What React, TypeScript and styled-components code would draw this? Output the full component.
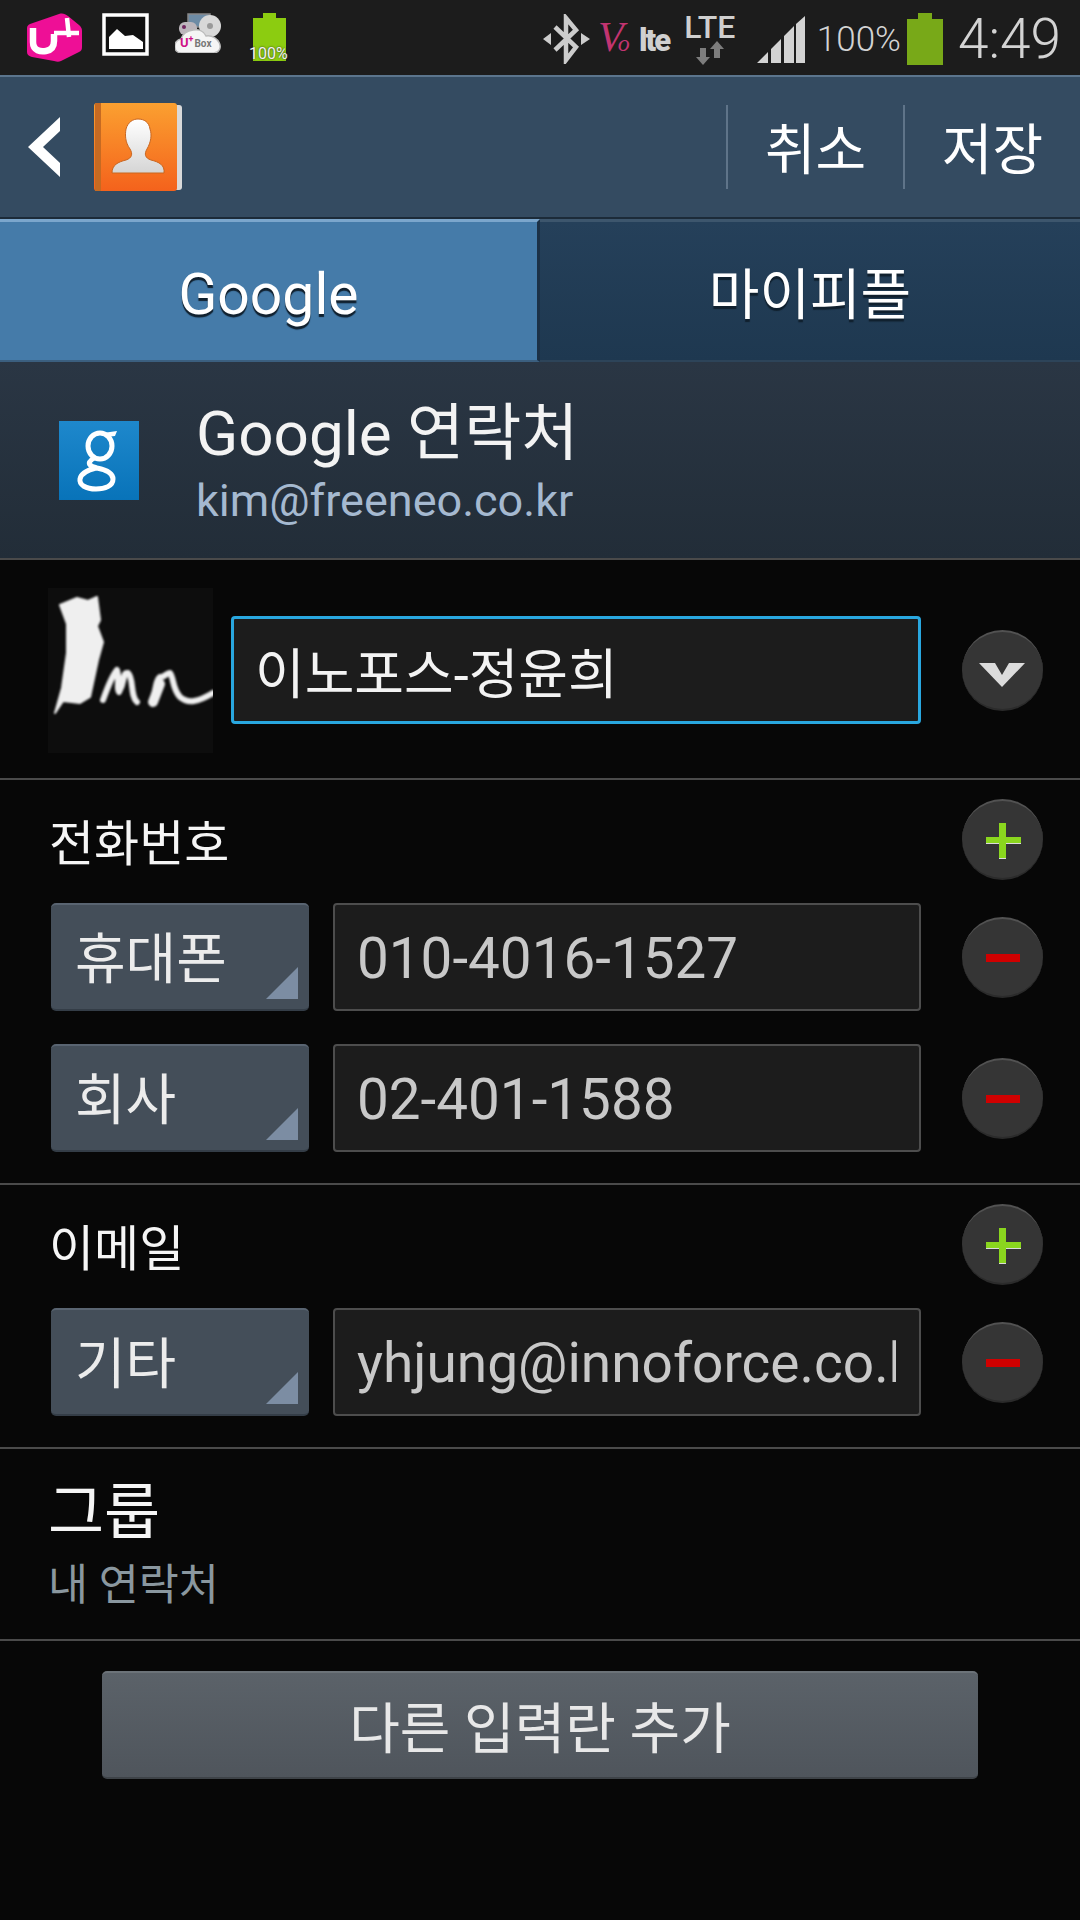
import React from "react";
import styled, { createGlobalStyle } from "styled-components";

const sans = `Roboto, "Noto Sans CJK KR", sans-serif`;

const Global = createGlobalStyle`
  html, body {
    margin: 0;
    padding: 0;
    background: #070707;
  }
  * {
    box-sizing: border-box;
  }
`;

function App() {
  return (
    <Page>
      <Global />
      <StatusBar>
        <Glyph $left={27} width="55" height="49" viewBox="0 0 55 49">
          <path d="M3 11 32 1C36 0 38 1 41 3L52 12C54 14 55 15 55 18V34C55 37 54 38 52 39L34 48C32 49 30 49 27 48L5 44C2 43 0 42 0 39V15C0 13 1 12 3 11Z" fill="#ee0f96" />
          <path d="M6 15V29C6 38 14 39 19 38 25 37 27 33 27 28V21" fill="none" stroke="#fff" strokeWidth="6.5" />
          <path d="M27 20 52 20M40 5 42 24" fill="none" stroke="#fff" strokeWidth="4.5" />
        </Glyph>
        <Glyph $left={20} width="47" height="43" viewBox="0 0 47 43">
          <rect x="2" y="2" width="43" height="39" fill="#111" stroke="#fff" strokeWidth="3.5" />
          <path d="M7 36V24L15 16 23 23 31 22 41 29V36Z" fill="#fff" />
        </Glyph>
        <Glyph $left={26} width="47" height="40" viewBox="0 0 47 40">
          <rect x="13" y="1" width="22" height="13" fill="#6d8ba5" stroke="#888" strokeWidth="1.5" />
          <circle cx="35" cy="13" r="11" fill="#d8d8d8" />
          <circle cx="35" cy="13" r="3" fill="#999" />
          <rect x="4" y="9" width="18" height="13" rx="6" fill="#bcb6bc" />
          <circle cx="9" cy="14" r="2" fill="#70255f" />
          <path d="M7 40C-3 40-2 27 6 26 9 16 27 13 31 23 44 21 51 38 39 40Z" fill="#f5f5f5" stroke="#bbb" strokeWidth="1.5" />
          <text x="5" y="34" fontFamily="Roboto" fontWeight="700" fontSize="13" fill="#cf1287">
            U<tspan fontSize="9" dy="-5">+</tspan>
            <tspan fontSize="10" dy="5" dx="1" fill="#777">Box</tspan>
          </text>
        </Glyph>
        <BatteryWithLabel>
          <svg width="33" height="48" viewBox="0 0 33 48">
            <path d="M10 0H23V5H33V48H0V5H10Z" fill="#8ccc10" />
          </svg>
          <BatteryLabel>100%</BatteryLabel>
        </BatteryWithLabel>
        <StatusRight>
          <Glyph $left={0} width="47" height="50" viewBox="0 0 47 50">
            <path d="M12 13 33 33 23 46V4L33 16 12 36" fill="none" stroke="#ccc" strokeWidth="4.5" />
            <path d="M0 25 8 19V31ZM47 25 38 19V31Z" fill="#ccc" />
          </Glyph>
          <Glyph $left={6} width="78" height="36" viewBox="0 0 78 36">
            <text x="2" y="30" fontFamily="Liberation Serif" fontStyle="italic" fontSize="42" fill="#c23471">
              V<tspan fontSize="24" dx="-6">o</tspan>
            </text>
            <text x="43" y="30" fontFamily="Roboto" fontWeight="900" fontSize="31" letterSpacing="-2" fill="#d0d0d0">lte</text>
          </Glyph>
          <LteStack>
            <LteText>LTE</LteText>
            <svg width="28" height="24" viewBox="0 0 28 24">
              <path d="M4 7H10V16H14L7 24 0 16H4ZM18 8H24V17H18ZM21 0 28 8H14Z" fill="#7d7d7d" />
            </svg>
          </LteStack>
          <Glyph $left={22} width="48" height="47" viewBox="0 0 48 47">
            <path d="M0 47 11 36V47ZM14 33 24 23V47H14ZM27 20 37 10V47H27ZM39 8 48 0V47H39Z" fill="#d3d3d3" />
          </Glyph>
          <SignalPercent>100%</SignalPercent>
          <Glyph $left={6} width="36" height="52" viewBox="0 0 36 52">
            <path d="M11 0H25V6H36V52H0V6H11Z" fill="#78a918" />
          </Glyph>
          <Clock>4:49</Clock>
        </StatusRight>
      </StatusBar>

      <ActionBar>
        <svg width="32" height="60" viewBox="0 0 32 60">
          <path d="M0 30 32 0V14L15 30 32 46V60Z" fill="#fff" />
        </svg>
        <ContactsIcon width="88" height="88" viewBox="0 0 88 88">
          <defs>
            <linearGradient id="book" x1="0" y1="0" x2="0" y2="1">
              <stop offset="0" stopColor="#fba030" />
              <stop offset="1" stopColor="#f4621c" />
            </linearGradient>
            <linearGradient id="bust" x1="0" y1="0" x2="0" y2="1">
              <stop offset="0" stopColor="#fff" />
              <stop offset="1" stopColor="#d5d5d5" />
            </linearGradient>
          </defs>
          <rect x="6" y="2" width="82" height="85" rx="3" fill="#d9d9d9" />
          <rect x="0" y="0" width="83" height="88" rx="3" fill="url(#book)" />
          <rect x="1" y="0" width="6" height="88" fill="#c66a22" />
          <path d="M18 70C18 62 24 59 32 57 38 55 39 51 36 46 31 39 31 32 32 26 34 19 39 16 44 16 50 16 55 19 56 26 58 32 57 39 53 46 50 51 51 55 57 57 65 59 71 62 70 70Z" fill="url(#bust)" stroke="#c9661f" strokeWidth="1" />
        </ContactsIcon>
        <ActionButton $first>취소</ActionButton>
        <ActionButton>저장</ActionButton>
      </ActionBar>

      <Tabs>
        <Tab $active>Google</Tab>
        <Tab>마이피플</Tab>
      </Tabs>

      <AccountHeader>
        <GoogleBadge width="80" height="79" viewBox="0 0 80 79">
          <ellipse cx="41" cy="25" rx="12" ry="13" fill="none" stroke="#fff" strokeWidth="5" />
          <path d="M44 12 58 10 56 15 47 16Z" fill="#fff" />
          <path d="M35 37C27 42 30 45 38 47 48 49 54 52 54 58 54 65 46 68 37 68 27 68 20 64 21 58 22 52 29 49 37 47" fill="none" stroke="#fff" strokeWidth="5" />
        </GoogleBadge>
        <AccountText>
          <AccountName>Google 연락처</AccountName>
          <AccountMail>kim@freeneo.co.kr</AccountMail>
        </AccountText>
      </AccountHeader>

      <NameSection>
        <Photo viewBox="0 0 165 165">
          <g fill="none" stroke="#efefef" strokeLinecap="round" strokeLinejoin="round">
            <path d="M7 125 15 113 32 115 42 109 50 72 55 54 49 38 52 32 49 9 40 13 29 10 12 17 19 36 19 65 14 100Z" fill="#efefef" strokeWidth="2" />
            <path d="M55 112C60 98 64 88 69 82 72 92 68 100 71 104 78 92 74 84 80 85 86 90 82 108 89 114" strokeWidth="6" />
            <path d="M105 112C108 100 108 92 112 89 116 90 118 85 122 85 126 90 124 100 132 109 140 116 150 114 165 105" strokeWidth="6" />
            <path d="M105 114 112 96" strokeWidth="10" />
          </g>
        </Photo>
        <NameField>
          <NameText>이노포스-정윤희</NameText>
        </NameField>
        <RoundButton $tone="expand" />
      </NameSection>

      <FieldSection>
        <SectionHead>
          <SectionLabel>전화번호</SectionLabel>
          <RoundButton $tone="add" />
        </SectionHead>
        <FieldRow>
          <TypeSelect>휴대폰</TypeSelect>
          <ValueField>
            <FieldText $size={56.6}>010-4016-1527</FieldText>
          </ValueField>
          <RoundButton $tone="remove" />
        </FieldRow>
        <FieldRow>
          <TypeSelect>회사</TypeSelect>
          <ValueField>
            <FieldText $size={56.6}>02-401-1588</FieldText>
          </ValueField>
          <RoundButton $tone="remove" />
        </FieldRow>
      </FieldSection>

      <FieldSection>
        <SectionHead>
          <SectionLabel>이메일</SectionLabel>
          <RoundButton $tone="add" />
        </SectionHead>
        <FieldRow>
          <TypeSelect>기타</TypeSelect>
          <ValueField>
            <FieldText $size={55}>yhjung@innoforce.co.kr</FieldText>
          </ValueField>
          <RoundButton $tone="remove" />
        </FieldRow>
      </FieldSection>

      <GroupSection>
        <GroupTitle>그룹</GroupTitle>
        <GroupValue>내 연락처</GroupValue>
      </GroupSection>

      <AddButton>다른 입력란 추가</AddButton>
    </Page>
  );
}

function RoundButton({ $tone }: { $tone: "expand" | "add" | "remove" }) {
  return (
    <Round>
      <svg width="81" height="81" viewBox="0 0 81 81">
        {$tone === "expand" && <path d="M17 33H33L40 45 47 33H63L40 57Z" fill="#dcdcdc" />}
        {$tone === "add" && (
          <>
            <path d="M37 24H44V60H37ZM24 38H59V45H24Z" fill="#dcdcdc" />
            <path d="M37 24H44V59H37ZM24 38H59V44H24Z" fill="#8ad61e" />
          </>
        )}
        {$tone === "remove" && <rect x="24" y="37" width="34" height="8" fill="#d00000" />}
      </svg>
    </Round>
  );
}

const Page = styled.div`
  width: 1080px;
  height: 1920px;
  overflow: hidden;
  background: #070707;
  font-family: ${sans};
`;

const StatusBar = styled.div`
  display: flex;
  align-items: flex-start;
  height: 75px;
  padding: 13px 19px 0 0;
  background: #1c1c1c;
`;

const Glyph = styled.svg<{ $left: number }>`
  flex: none;
  margin-left: ${({ $left }) => $left}px;
`;

const BatteryWithLabel = styled.div`
  position: relative;
  width: 33px;
  height: 48px;
  margin-left: 31px;
`;

const BatteryLabel = styled.span`
  position: absolute;
  left: -4px;
  bottom: -2px;
  font-size: 16px;
  color: #f2f2f2;
  text-shadow: 0 0 2px #222;
`;

const StatusRight = styled.div`
  display: flex;
  align-items: center;
  height: 52px;
  margin-left: auto;
`;

const LteStack = styled.div`
  display: flex;
  flex-direction: column;
  align-items: center;
  width: 50px;
  margin-left: 11px;
`;

const LteText = styled.span`
  font-size: 32px;
  line-height: 27px;
  font-weight: 500;
  color: #cfcfcf;
`;

const SignalPercent = styled.span`
  margin-left: 12px;
  font-size: 35px;
  font-weight: 300;
  color: #d3d3d3;
`;

const Clock = styled.span`
  margin-left: 15px;
  font-size: 55px;
  font-weight: 300;
  color: #d3d3d3;
`;

const ActionBar = styled.div`
  display: flex;
  align-items: center;
  height: 144px;
  padding-left: 28px;
  background: #344b61;
  border-top: 2px solid #5b758d;
  border-bottom: 2px solid #1c2b39;
`;

const ContactsIcon = styled.svg`
  margin-left: 34px;
`;

const ActionButton = styled.div<{ $first?: boolean }>`
  display: flex;
  align-items: center;
  justify-content: center;
  width: 177px;
  height: 84px;
  padding-bottom: 5px;
  margin-left: ${({ $first }) => ($first ? "auto" : "0")};
  border-left: 2px solid #5f7489;
  font-size: 55px;
  color: #fff;
`;

const Tabs = styled.div`
  display: flex;
  height: 143px;
`;

const Tab = styled.div<{ $active?: boolean }>`
  display: flex;
  align-items: center;
  justify-content: center;
  flex: ${({ $active }) => ($active ? "0 0 540px" : "1")};
  padding: ${({ $active }) => ($active ? "6px 0 0" : "0 0 3px")};
  border-top: 3px solid ${({ $active }) => ($active ? "#7ba6cc" : "#3d566d")};
  border-right: ${({ $active }) => ($active ? "3px solid #1c3146" : "0")};
  border-bottom: 2px solid ${({ $active }) => ($active ? "#3b5f7f" : "#2d4459")};
  background: ${({ $active }) =>
    $active ? "#457ba9" : "linear-gradient(#25405a, #1e3850)"};
  font-size: ${({ $active }) => ($active ? "57px" : "55px")};
  color: #fff;
  text-shadow: 0 3px 1px #10202e;
`;

const AccountHeader = styled.div`
  display: flex;
  align-items: center;
  height: 198px;
  padding-left: 59px;
  background: linear-gradient(#2a3644, #222d38);
  border-bottom: 2px solid #4a4a4a;
`;

const GoogleBadge = styled.svg`
  flex: none;
  background: linear-gradient(#1e88cc, #0873b9);
`;

const AccountText = styled.div`
  display: flex;
  flex-direction: column;
  margin-left: 57px;
  padding-top: 7px;
`;

const AccountName = styled.div`
  font-size: 62px;
  line-height: 68px;
  color: #f3f3f3;
`;

const AccountMail = styled.div`
  margin-top: 7px;
  font-size: 45px;
  line-height: 52px;
  color: #a5b9d0;
`;

const NameSection = styled.div`
  display: flex;
  align-items: center;
  height: 220px;
  padding: 2px 0 0 48px;
  border-bottom: 2px solid #4a4a4a;
`;

const Photo = styled.svg`
  flex: none;
  width: 165px;
  height: 165px;
  margin-right: 18px;
  background: #0d0d0d;
  g {
    filter: blur(0.8px);
  }
`;

const FieldBox = styled.div`
  display: flex;
  align-items: center;
  height: 108px;
  padding: 0 23px 0 22px;
  border-radius: 4px;
  background: #1c1c1c;
`;

const NameField = styled(FieldBox)`
  width: 690px;
  margin-right: 41px;
  padding-left: 21px;
  border: 3px solid #29a7df;
  color: #f3f3f3;
`;

const ValueField = styled(FieldBox)`
  width: 588px;
  margin: 0 41px 0 24px;
  border: 2px solid #4d4d4d;
  color: #c8c8c8;
`;

const FieldText = styled.span<{ $size: number }>`
  overflow: hidden;
  white-space: nowrap;
  padding-top: 2px;
  font-size: ${({ $size }) => $size}px;
`;

const NameText = styled.span`
  white-space: nowrap;
  font-size: 54px;
`;

const Round = styled.div`
  flex: none;
  width: 81px;
  height: 81px;
  border-radius: 50%;
  background: #353535;
  border-top: 2px solid #525252;
  border-bottom: 2px solid #2b2b2b;
  svg {
    display: block;
    margin-top: -2px;
  }
`;

const FieldSection = styled.div`
  display: flex;
  flex-direction: column;
  gap: 33px;
  padding: 19px 37px 31px 51px;
  border-bottom: 2px solid #4a4a4a;
`;

const SectionHead = styled.div`
  display: flex;
  align-items: center;
  justify-content: space-between;
  margin-bottom: -10px;
`;

const SectionLabel = styled.div`
  margin-left: -2px;
  font-size: 49px;
  color: #f5f5f5;
`;

const FieldRow = styled.div`
  display: flex;
  align-items: center;
`;

const TypeSelect = styled.div`
  position: relative;
  display: flex;
  align-items: center;
  flex: none;
  width: 258px;
  height: 108px;
  padding: 0 24px 6px;
  border-radius: 5px;
  border-top: 2px solid #596471;
  border-bottom: 2px solid #343d47;
  background: #444e59;
  font-size: 55px;
  color: #ececec;

  &::after {
    content: "";
    position: absolute;
    right: 11px;
    bottom: 10px;
    border-style: solid;
    border-width: 0 0 32px 32px;
    border-color: transparent transparent #7c8da3 transparent;
  }
`;

const GroupSection = styled.div`
  display: flex;
  flex-direction: column;
  height: 192px;
  padding: 26px 0 0 48px;
  border-bottom: 2px solid #4a4a4a;
`;

const GroupTitle = styled.div`
  font-size: 61px;
  line-height: 76px;
  color: #f5f5f5;
`;

const GroupValue = styled.div`
  margin-top: 5px;
  font-size: 43.5px;
  line-height: 60px;
  color: #8a979f;
`;

const AddButton = styled.div`
  display: flex;
  align-items: center;
  justify-content: center;
  width: 876px;
  height: 108px;
  margin: 30px 0 0 102px;
  padding-bottom: 3px;
  border-radius: 5px;
  border-top: 2px solid #6c7379;
  border-bottom: 2px solid #3e4348;
  background: linear-gradient(#5b6269, #4f555c);
  font-size: 55px;
  color: #e8e8e8;
`;

export default App;
